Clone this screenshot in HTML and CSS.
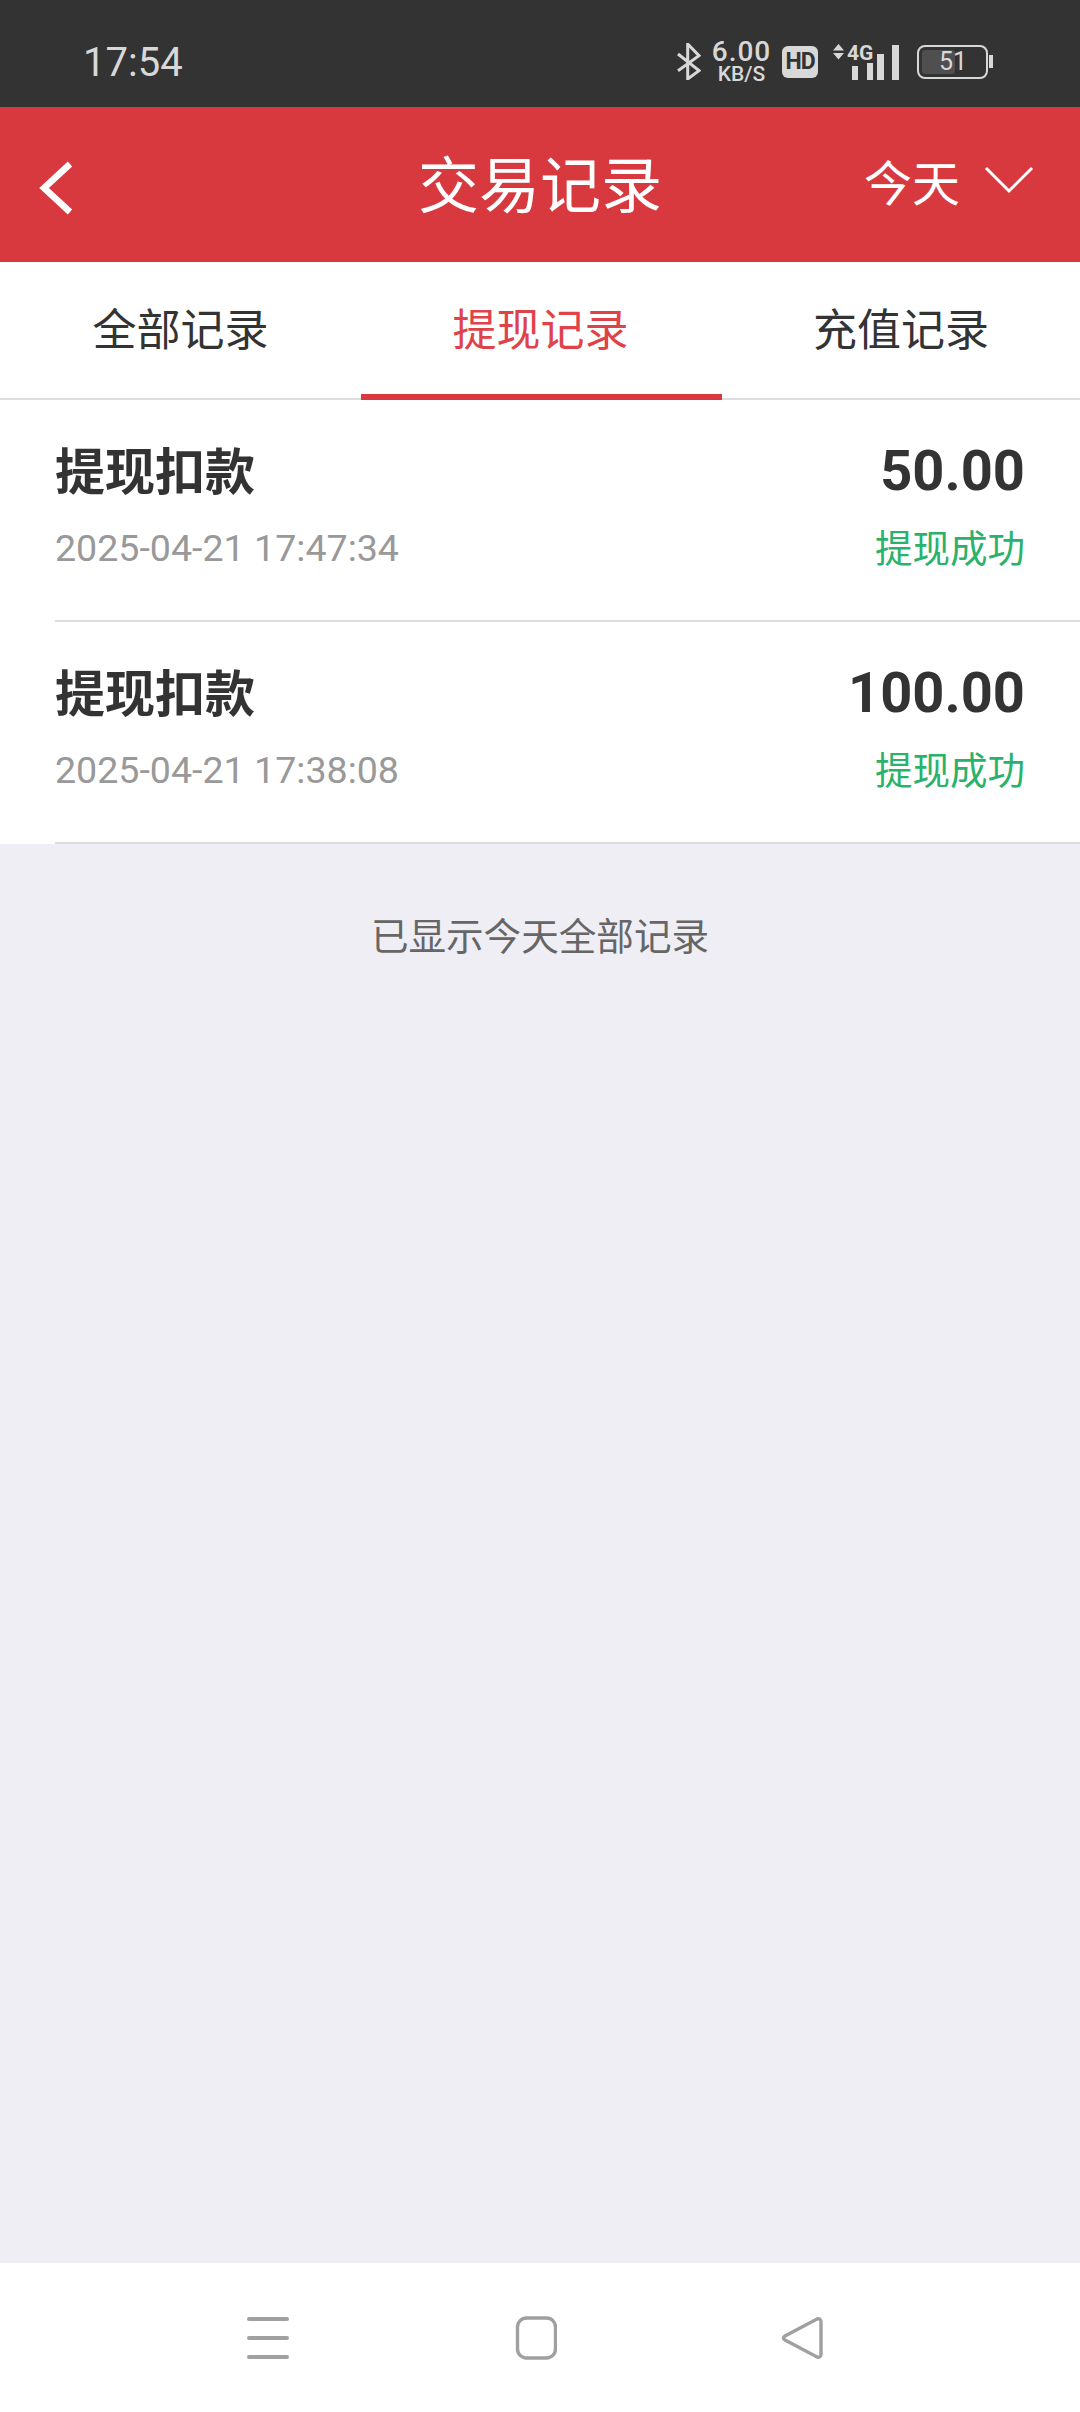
FILE: index.html
```html
<!DOCTYPE html>
<html lang="zh-CN">

<head>
    <meta charset="UTF-8">
    <meta name="viewport" content="width=device-width, initial-scale=1.0">
    <title>交易记录</title>
    <link rel="stylesheet" href="styles.css">
</head>

<body>

    <div class="status-bar">
        <span class="status-time">17:54</span>
        <div class="status-icons">
            <svg class="icon-bt" width="24" height="37" viewBox="0 0 24 37">
                <path d="M1 11 L22 27.7 L10.7 36 L10.7 1 L22 12.7 L1 27.7" fill="none" stroke="#d8d8d8" stroke-width="3"/>
            </svg>
            <div class="net-speed">
                <span class="net-value">6.00</span>
                <span class="net-unit">KB/S</span>
            </div>
            <span class="hd-badge">HD</span>
            <svg class="signal" width="66" height="36" viewBox="0 0 66 36">
                <path d="M5.5 0 L11 6.5 L0 6.5 Z M0 9 L11 9 L5.5 15.5 Z" fill="#d8d8d8"/>
                <text class="signal-type" x="14" y="16">4G</text>
                <rect x="19" y="22" width="6" height="14" fill="#d8d8d8"/>
                <rect x="34" y="19" width="6" height="17" fill="#d8d8d8"/>
                <rect x="44" y="10" width="7" height="26" fill="#d8d8d8"/>
                <rect x="59" y="1" width="7" height="35" fill="#d8d8d8"/>
            </svg>
            <div class="battery">
                <div class="battery-body">
                    <span class="battery-fill">51</span>
                </div>
                <i class="battery-cap"></i>
            </div>
        </div>
    </div>

    <header class="top-bar">
        <svg class="back-icon" width="38" height="56" viewBox="0 0 38 56">
            <path d="M33 4 L7 28 L33 52" fill="none" stroke="#fff" stroke-width="6.5"/>
        </svg>
        <h1 class="page-title">交易记录</h1>
        <div class="date-filter">
            <span>今天</span>
            <svg width="50" height="30" viewBox="0 0 50 30">
                <path d="M2 3 L25 26 L48 3" fill="none" stroke="#fff" stroke-width="3"/>
            </svg>
        </div>
    </header>

    <nav class="tabs">
        <a class="tab">全部记录</a>
        <a class="tab active">提现记录</a>
        <a class="tab">充值记录</a>
    </nav>

    <main class="content">
        <ul class="record-list">
            <li class="record">
                <div class="record-row">
                    <span class="record-name">提现扣款</span>
                    <span class="record-amount">50.00</span>
                </div>
                <div class="record-row record-sub">
                    <span class="record-date">2025-04-21 17:47:34</span>
                    <span class="record-status">提现成功</span>
                </div>
            </li>
            <li class="record">
                <div class="record-row">
                    <span class="record-name">提现扣款</span>
                    <span class="record-amount">100.00</span>
                </div>
                <div class="record-row record-sub">
                    <span class="record-date">2025-04-21 17:38:08</span>
                    <span class="record-status">提现成功</span>
                </div>
            </li>
        </ul>
        <p class="list-end">已显示今天全部记录</p>
    </main>

    <div class="nav-bar">
        <svg width="44" height="44" viewBox="0 0 44 44">
            <path d="M3 3 H41 M3 22 H41 M3 41 H41" stroke="#a0a0a0" stroke-width="4" stroke-linecap="round"/>
        </svg>
        <svg width="44" height="44" viewBox="0 0 44 44">
            <rect x="4.5" y="2" width="38" height="40" rx="9" fill="none" stroke="#a0a0a0" stroke-width="3.4"/>
        </svg>
        <svg width="44" height="44" viewBox="0 0 44 44">
            <path d="M37 3 Q41 2 41 6 V38 Q41 42 37 41 L5 24 Q2 22 5 20 Z" fill="none" stroke="#a0a0a0" stroke-width="3.4"/>
        </svg>
    </div>

</body>

</html>
```

FILE: styles.css
```css
* {
    box-sizing: border-box;
}

body {
    font-family: Roboto, "Noto Sans CJK SC", sans-serif;
    margin: 0;
    padding: 0;
    width: 1080px;
    height: 2412px;
    display: flex;
    flex-direction: column;
    background-color: #eeeef4;
}

/* status bar */
.status-bar {
    height: 107px;
    background-color: #333;
    color: #d8d8d8;
    display: flex;
    justify-content: space-between;
    align-items: center;
    padding: 16px 87px 0 83px;
    flex-shrink: 0;
}

.status-time {
    padding-top: 2px;
    font-size: 40px;
}

.status-icons {
    display: flex;
    align-items: center;
}

.net-speed {
    display: flex;
    flex-direction: column;
    align-items: center;
    width: 57px;
    margin-left: 12px;
    font-weight: 500;
}

.net-value {
    font-size: 28px;
    line-height: 24px;
    letter-spacing: 1px;
}

.net-unit {
    font-size: 21px;
    line-height: 20px;
    white-space: nowrap;
}

.hd-badge {
    margin-left: 12px;
    width: 36px;
    height: 32px;
    border-radius: 6px;
    background-color: #d8d8d8;
    color: #333;
    font-size: 23px;
    font-weight: 700;
    letter-spacing: -1px;
    line-height: 32px;
    text-align: center;
}

.signal {
    margin-left: 15px;
    overflow: visible;
}

.signal-type {
    font-size: 21px;
    font-weight: 700;
    fill: #d8d8d8;
}

.battery {
    display: flex;
    align-items: center;
    margin-left: 18px;
}

.battery-body {
    width: 71px;
    height: 34px;
    border: 2px solid #d8d8d8;
    border-radius: 8px;
    padding: 3px;
}

.battery-fill {
    display: block;
    width: 33px;
    height: 24px;
    border-radius: 3px;
    background-color: #4f4f4f;
    color: #d8d8d8;
    font-size: 25px;
    line-height: 24px;
    white-space: nowrap;
    text-indent: 17px;
}

.battery-cap {
    display: block;
    width: 4px;
    height: 13px;
    margin-left: 1px;
    background-color: #d8d8d8;
}

/* red header */
.top-bar {
    height: 155px;
    background-color: #d8393f;
    color: #fff;
    display: flex;
    align-items: center;
    justify-content: center;
    position: relative;
    flex-shrink: 0;
}

.back-icon {
    position: absolute;
    left: 37px;
    top: 53px;
}

.page-title {
    margin: 0 0 6px;
    font-size: 61px;
    font-weight: 400;
}

.date-filter {
    position: absolute;
    right: 46px;
    top: 38px;
    display: flex;
    align-items: center;
    gap: 24px;
    font-size: 48px;
}

/* tabs */
.tabs {
    height: 138px;
    background-color: #fff;
    border-bottom: 2px solid #ddd;
    display: flex;
    flex-shrink: 0;
}

.tab {
    flex: 0 0 361px;
    height: 138px;
    line-height: 139px;
    text-align: center;
    font-size: 44px;
    color: #333;
}

.tab:last-child {
    flex: 0 0 358px;
}

.tab.active {
    padding-right: 2px;
    color: #e0424a;
    border-bottom: 6px solid #d8383f;
}

/* records */
.content {
    flex: 1;
}

.record-list {
    list-style: none;
    margin: 0;
    padding: 0;
    background-color: #fff;
}

.record {
    height: 222px;
    margin-left: 55px;
    padding: 32px 55px 0 0;
    border-bottom: 2px solid #ddd;
}

.record-row {
    display: flex;
    justify-content: space-between;
    align-items: center;
    height: 72px;
}

.record-sub {
    margin-top: 13px;
    height: 56px;
}

.record-name {
    font-size: 50px;
    font-weight: 700;
    color: #333;
}

.record-amount {
    padding-top: 6px;
    font-size: 56px;
    font-weight: 700;
    color: #333;
}

.record-date {
    padding-top: 6px;
    font-size: 37.6px;
    color: #999;
}

.record-status {
    font-size: 37.5px;
    color: #2ab26b;
}

.list-end {
    margin: 68px 0 0;
    text-align: center;
    font-size: 37.6px;
    line-height: 50px;
    color: #666;
}

/* bottom nav */
.nav-bar {
    height: 149px;
    background-color: #fff;
    display: flex;
    align-items: center;
    padding: 0 256px 0 246px;
    justify-content: space-between;
    flex-shrink: 0;
}
```
